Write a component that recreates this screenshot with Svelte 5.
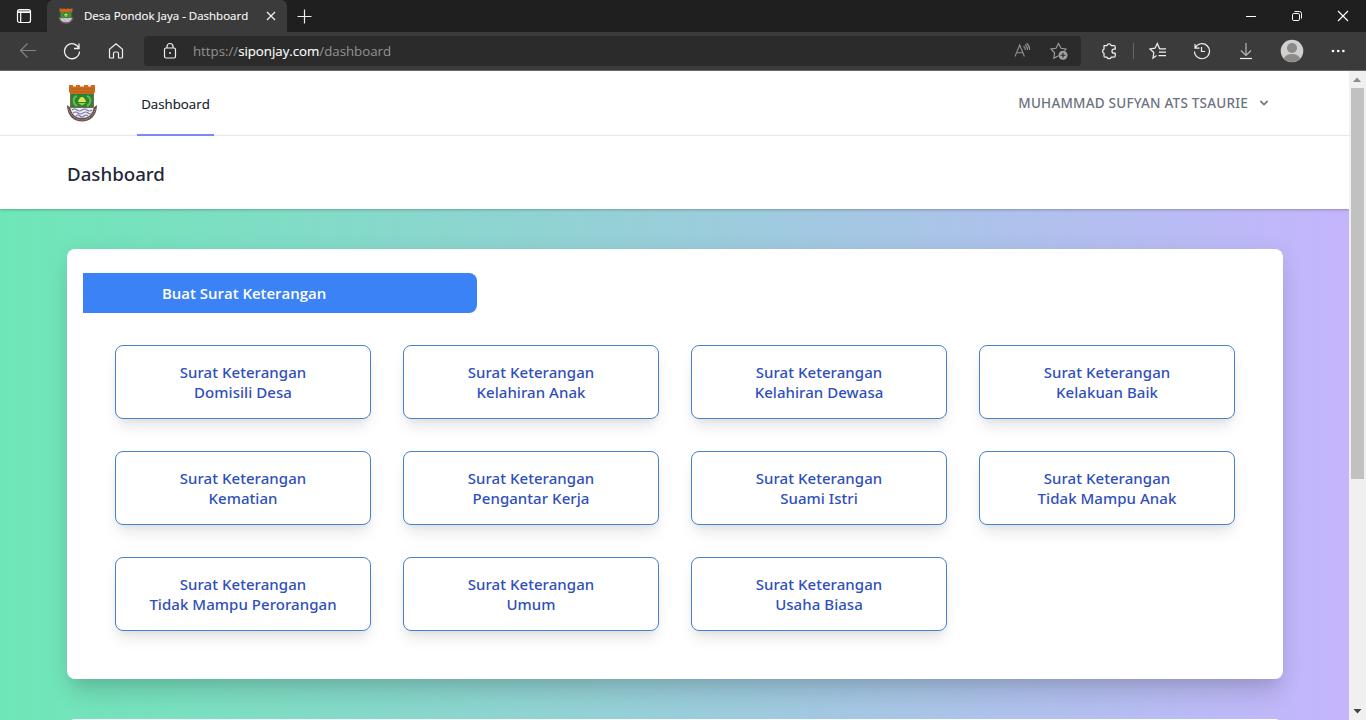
<script>
  const letters = [
    ['Surat Keterangan', 'Domisili Desa'],
    ['Surat Keterangan', 'Kelahiran Anak'],
    ['Surat Keterangan', 'Kelahiran Dewasa'],
    ['Surat Keterangan', 'Kelakuan Baik'],
    ['Surat Keterangan', 'Kematian'],
    ['Surat Keterangan', 'Pengantar Kerja'],
    ['Surat Keterangan', 'Suami Istri'],
    ['Surat Keterangan', 'Tidak Mampu Anak'],
    ['Surat Keterangan', 'Tidak Mampu Perorangan'],
    ['Surat Keterangan', 'Umum'],
    ['Surat Keterangan', 'Usaha Biasa']
  ];
</script>

{#snippet crest(w, h)}
  <svg width={w} height={h} viewBox="0 0 32 38" preserveAspectRatio="none">
    <path d="M1 21C1 32 8 37.500 16 37.500S31 32 31 21L27 24H5Z" fill="#65504e" />
    <path d="M4 22C5 30 9 34 16 34S27 30 28 22Z" fill="#f0edf5" />
    <path d="M2.500 25C5 32 10 36 16 36S27 32 29.500 25" fill="none" stroke="#d8c9c2" stroke-width=".7" stroke-dasharray="1 1" />
    <path d="M6 26q2.500-2 5 0t5 0 5 0 5 0M7 29q2.500-2 5 0t5 0 5 0 4 0M10 32q2-2 4 0t4 0 4 0" fill="none" stroke="#7773a5" stroke-width="1.100" />
    <path d="M4.500 9H27.500V23.500H4.500Z" fill="#268338" stroke="#85502a" stroke-width=".8" />
    <path d="M11 12C6 14 7 20 11 22M21 12C26 14 25 20 21 22" fill="none" stroke="#69b84a" stroke-width="2" />
    <path d="M12 18C12.500 15 14.500 13 16 13S19.500 15 20 18Z" fill="#e6e443" />
    <path d="M12 19H20L16 21.500Z" fill="#9ecb49" />
    <path d="M3 1H7V2.500H10V1H14V2.500H18V1H22V2.500H25V1H29V8L27 10H5L3 8Z" fill="#cf6b1e" />
    <path d="M3.500 5H28.500M5 8H27" stroke="#a9541d" stroke-width=".6" />
  </svg>
{/snippet}

<div class="window">
  <header class="tabs">
    <div class="tabmenu">
      <svg width="16" height="16" viewBox="0 0 16 16" fill="none" stroke="#fff" stroke-width="1.200"><rect x="1.500" y="1.500" width="13" height="13" rx="2" /><path d="M2 3.200H14M2 4.500H14M4.700 4V14" /></svg>
    </div>
    <div class="tab">
      {@render crest(16, 16)}
      <span class="title">Desa Pondok Jaya - Dashboard</span>
      <svg class="close" width="10" height="10" viewBox="0 0 10 10" stroke="#f2f2f2" stroke-width="1.200"><path d="M1 1 9 9M9 1 1 9" /></svg>
    </div>
    <svg class="plus" width="15" height="15" viewBox="0 0 15 15" stroke="#eee" stroke-width="1.200"><path d="M7.500.5V14.500M.5 7.500H14.500" /></svg>
    <div class="controls">
      <svg width="12" height="12" viewBox="0 0 12 12" stroke="#fff"><path d="M1 6.500H11" /></svg>
      <svg width="12" height="12" viewBox="0 0 12 12" fill="none" stroke="#fff"><rect x="1.500" y="3.500" width="7" height="7" rx="1.300" /><path d="M3.500 1.500H8.500Q10.500 1.500 10.500 3.500V8.500" /></svg>
      <svg width="12" height="12" viewBox="0 0 12 12" stroke="#fff" stroke-width="1.200"><path d="M1 1 11 11M11 1 1 11" /></svg>
    </div>
  </header>

  <div class="toolbar">
    <div class="navicons">
      <svg width="18" height="18" viewBox="0 0 18 18" fill="none" stroke="#858585" stroke-width="1.100"><path d="M17 8.500H1.500M8.500 1.500 1.500 8.500 8.500 15.500" /></svg>
      <svg width="18" height="18" viewBox="0 0 18 18" fill="none" stroke="#f0f0f0" stroke-width="1.300"><path d="M16 6.500A7.500 7.500 0 1 0 16.500 9.500M16 1.500V6.500H11" /></svg>
      <svg width="18" height="18" viewBox="0 0 18 18" fill="none" stroke="#f0f0f0" stroke-width="1.200"><path d="M2.500 7.300 9 1.700 15.500 7.300V15Q15.500 16 14.500 16H11.500V11.500Q11.500 10 10 10H8Q6.500 10 6.500 11.500V16H3.500Q2.500 16 2.500 15Z" /></svg>
    </div>
    <div class="address">
      <svg class="lock" width="16" height="18" viewBox="0 0 16 18" fill="none" stroke="#f0f0f0" stroke-width="1.200"><rect x="2.500" y="6" width="11" height="10" rx="1.500" /><path d="M5 6V4.500A3 3 0 0 1 11 4.500V6" /><circle cx="8" cy="11" r=".7" fill="#fff" stroke-width=".5" /></svg>
      <span class="url">https://<b>siponjay.com</b>/dashboard</span>
      <svg class="read" width="18" height="18" viewBox="0 0 18 18" fill="none" stroke="#929292" stroke-width="1.100"><path d="M2 14.500 6.700 3 11.400 14.500M3.500 10.700H9.800M10.500 4.200Q12.300 5.500 12.300 8M12 2.500Q14.500 4.500 14.500 8M13.500 1.200Q17 4 16.500 8" /></svg>
      <svg width="18" height="18" viewBox="0 0 18 18" fill="none" stroke="#a0a0a0" stroke-width="1.100"><path d="M8 14 3.800 16.300 4.600 10.800 1 7 6 6.200 8.500 1.500 11 6.200 16 7 14.500 8.500" /><circle cx="13" cy="13.200" r="4.500" fill="#a0a0a0" stroke="none" /><path d="M13 10.700V15.700M10.500 13.200H15.500" stroke="#2b2b2b" /></svg>
    </div>
    <div class="tools">
      <svg class="puzzle" width="18" height="18" viewBox="0 0 18 18" fill="none" stroke="#f0f0f0" stroke-width="1.250" stroke-linejoin="round"><path d="M4 3.500H7A2.200 2.200 0 0 1 11.200 3.500H14Q15.200 3.500 15.200 4.700V7.200H14A2 2 0 0 0 14 11.200H15.200V14Q15.200 15.200 14 15.200H11.200A2.200 2.200 0 0 1 7 15.200H5.200Q4 15.200 4 14V11.300A2.200 2.200 0 0 1 4 7.200Z" /></svg>
      <i></i>
      <svg width="18" height="18" viewBox="0 0 18 18" fill="none" stroke="#f0f0f0" stroke-width="1.200"><path d="M7.500 13.500 4 16.200 4.800 10.500 1 7 6 6.200 8.300 1.500 10.600 6.800H17M10 10.200H17M9.500 13.700H17" /></svg>
      <svg class="history" width="18" height="18" viewBox="0 0 18 18" fill="none" stroke="#f0f0f0" stroke-width="1.200"><path d="M2 2V6.200H6.500M2.200 6A7.500 7.500 0 1 1 1.500 9.500M8.500 5V9.500H12" /></svg>
      <svg class="download" width="18" height="18" viewBox="0 0 18 18" fill="none" stroke="#f0f0f0" stroke-width="1.200"><path d="M9 1V13.500M4 8.500 9 13.500 14 8.500" stroke="#b8b8b8" /><path d="M3 16.500H15" /></svg>
      <svg class="avatar" width="24" height="24" viewBox="0 0 24 24"><defs><clipPath id="face"><circle cx="12" cy="12" r="11" /></clipPath></defs><circle cx="12" cy="12" r="11.300" fill="#d2d0ce" /><circle cx="12" cy="9" r="5" fill="#8c8a88" /><ellipse cx="12" cy="20" rx="8" ry="5" fill="#8c8a88" clip-path="url(#face)" /></svg>
      <svg width="18" height="18" viewBox="0 0 18 18" fill="#fff"><circle cx="4" cy="9" r="1.300" /><circle cx="9.200" cy="9" r="1.300" /><circle cx="14.400" cy="9" r="1.300" /></svg>
    </div>
  </div>

  <div class="viewport">
    <main>
      <nav>
        <div class="logo">{@render crest(32, 38)}</div>
        <a href="#dashboard"><span>Dashboard</span></a>
        <div class="user"><span>MUHAMMAD SUFYAN ATS TSAURIE</span>
          <svg width="16" height="16" viewBox="0 0 20 20" fill="#6b7280"><path d="M5.293 7.293a1 1 0 011.414 0L10 10.586l3.293-3.293a1 1 0 111.414 1.414l-4 4a1 1 0 01-1.414 0l-4-4a1 1 0 010-1.414z" /></svg>
        </div>
      </nav>
      <div class="heading"><h2>Dashboard</h2></div>
      <div class="content">
        <section class="card">
          <div class="banner"><span>Buat Surat Keterangan</span></div>
          <div class="grid">
            {#each letters as letter}
              <button><span>{letter[0]}</span><span>{letter[1]}</span></button>
            {/each}
          </div>
        </section>
        <section class="next"></section>
      </div>
    </main>
    <aside><svg width="16" height="17" viewBox="0 0 16 17"><path d="M4 11 8 6.500 12 11Z" fill="#8c8c8c" /></svg><div class="thumb"></div><svg class="down" width="16" height="17" viewBox="0 0 16 17"><path d="M4.500 6 8.500 10.500 12.500 6Z" fill="#444" /></svg></aside>
  </div>
</div>

<style>
  :global(body) { overflow: hidden; }
  * { box-sizing: border-box; }
  svg { display: block; flex: none; }
  span { white-space: nowrap; }
  .window { width: 1366px; height: 720px; overflow: hidden; display: flex; flex-direction: column; font-family: "Open Sans", "Noto Sans", sans-serif; }
  .tabs { height: 32px; flex: none; background: #1f1f1f; display: flex; align-items: center; }
  .tabmenu { width: 47px; height: 32px; padding: 8px 0 0 16px; background: #242424; border-radius: 0 0 4px 0; }
  .tab { width: 240px; height: 32px; background: #3b3b3b; border-radius: 6px 6px 0 0; display: flex; align-items: center; padding: 0 11px 0 11px; }
  .title { margin-left: 10px; color: #fff; font-size: 11.500px; letter-spacing: 0; line-height: 16px; -webkit-text-stroke: .1px; }
  .close { margin-left: auto; }
  .plus { margin-left: 10px; }
  .controls { margin-left: auto; display: flex; gap: 34px; padding-right: 17px; }
  .toolbar { height: 39px; flex: none; background: #3b3b3b; border-bottom: 1px solid #686868; display: flex; align-items: center; }
  .navicons { width: 144px; display: flex; gap: 26px; padding-left: 19px; }
  .address { width: 937px; height: 30px; background: #2b2b2b; border-radius: 4px; display: flex; align-items: center; padding: 0 13px 0 18px; }
  .url { margin-left: 15px; color: #929292; font-size: 13.300px; line-height: 18px; letter-spacing: -.03px; }
  .url b { color: #fff; font-weight: 400; -webkit-text-stroke: .1px; }
  .read { margin-left: auto; margin-right: 19px; }
  .tools { flex: 1; display: flex; align-items: center; padding-left: 19px; }
  .tools i { width: 1px; height: 16px; background: #666; margin: 0 15px 0 15px; }
  .history { margin-left: 26px; }
  .download { margin-left: 26px; }
  .avatar { margin: 0 25px; }
  .viewport { flex: 1; min-height: 0; display: flex; }
  main { width: 1349px; display: flex; flex-direction: column; overflow: hidden; background: linear-gradient(to right, #6ee7b7, #c4b5fd); }
  nav { height: 65px; flex: none; background: #fff; border-bottom: 1px solid #eceef1; display: flex; align-items: center; padding: 0 77px 0 66px; }
  .logo { width: 32px; margin-right: 39px; }
  nav a { align-self: flex-start; width: 77px; height: 65px; border-bottom: 2px solid #818cf8; color: #111827; text-decoration: none; display: flex; align-items: center; justify-content: center; font-size: 13.300px; -webkit-text-stroke: .15px; padding-top: 3px; }
  .user { margin-left: auto; color: #6b7280; display: flex; align-items: center; gap: 8px; font-family: "Noto Sans", sans-serif; font-weight: 500; font-size: 13.500px; letter-spacing: .22px; }
  .heading { height: 73px; flex: none; background: #fff; padding: 22px 67px; box-shadow: 0 1px 3px rgba(0,0,0,.15), 0 1px 2px rgba(0,0,0,.1); }
  h2 { margin: 0; font-family: "Noto Sans", sans-serif; font-size: 18.700px; line-height: 32px; font-weight: 500; color: #1f2937; }
  .content { flex: 1; padding: 40px 66px 0 67px; display: flex; flex-direction: column; gap: 40px; }
  .card { height: 430px; flex: none; background: #fff; border-radius: 8px; padding: 24px 16px; box-shadow: 0 20px 25px -5px rgba(0,0,0,.1), 0 10px 10px -5px rgba(0,0,0,.04), 0 4px 24px rgba(0,0,0,.08); }
  .next { height: 40px; flex: none; background: #fff; border-radius: 8px; }
  .banner { width: 394px; height: 40px; background: #3b82f6; border-radius: 0 8px 8px 0; color: #fff; padding-left: 79px; display: flex; align-items: center; font-size: 15px; font-weight: 600; letter-spacing: -.03px; }
  .grid { padding: 32px; display: grid; grid-template-columns: repeat(4, 256px); gap: 32px; }
  button { height: 74px; background: #fff; border: 1px solid #4682cf; border-radius: 8px; color: #2f4fbb; font: 500 15px/20px "Noto Sans", sans-serif; letter-spacing: .05px; display: flex; flex-direction: column; align-items: center; justify-content: center; padding: 0 0 1px; box-shadow: 0 10px 15px -3px rgba(0,0,0,.1), 0 4px 6px -2px rgba(0,0,0,.05); }
  aside { width: 17px; background: #f0f0f0; display: flex; flex-direction: column; }
  .thumb { width: 13px; height: 391px; background: #c1c1c1; margin-left: 2px; }
  .down { margin-top: auto; }
</style>
